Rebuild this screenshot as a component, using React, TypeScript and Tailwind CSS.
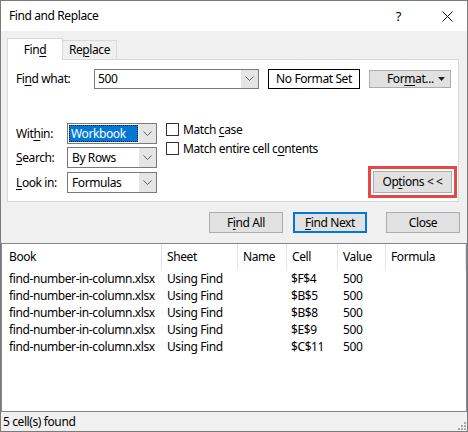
import React from 'react';

const U = ({ children }: { children: React.ReactNode }) => (
  <span className="underline underline-offset-2 decoration-1">{children}</span>
);

function Chevron() {
  return (
    <svg width="9" height="6" viewBox="0 0 9 6" className="text-[#606060]">
      <polyline points="0.5,0.5 4.5,4.5 8.5,0.5" fill="none" stroke="currentColor" strokeWidth="1" />
    </svg>
  );
}

function Combo({ value, width, selected }: { value: string; width: string; selected?: boolean }) {
  return (
    <div className={`flex h-[21px] ${width} border border-[#7a7a7a] bg-white`}>
      <div className="flex-1 flex items-stretch p-px">
        {selected ? (
          <div className="flex-1 flex items-center pl-[2px] bg-[#0078d7] text-white outline-1 outline-dotted outline-[#1a1a1a] -outline-offset-1">
            {value}
          </div>
        ) : (
          <div className="flex-1 flex items-center pl-[3px]">{value}</div>
        )}
      </div>
      <div className="w-[17px] bg-[#e5e5e5] flex items-center justify-center">
        <Chevron />
      </div>
    </div>
  );
}

function Checkbox({ children }: { children: React.ReactNode }) {
  return (
    <div className="flex items-center h-[13px]">
      <div className="w-[13px] h-[13px] border border-[#333333] bg-white" />
      <span className="ml-[4px]">{children}</span>
    </div>
  );
}

const rows = [
  { cell: '$F$4' },
  { cell: '$B$5' },
  { cell: '$B$8' },
  { cell: '$E$9' },
  { cell: '$C$11' },
];

const cols = 'grid grid-cols-[160px_76px_49px_51px_48px_80px]';

export default function App() {
  return (
    <div className="w-[468px] h-[432px] flex flex-col border border-[#7a7a7a] bg-[#f0f0f0] text-[12px] tracking-[-0.4px] whitespace-nowrap text-black font-['Noto_Sans',sans-serif] leading-none overflow-hidden">
      {/* Title bar */}
      <div className="h-[30px] shrink-0 bg-white flex items-center pl-[8px] pr-[14px]">
        <span className="text-[12px]">Find and Replace</span>
        <span className="ml-auto text-[13px] mr-[41px]">?</span>
        <svg width="11" height="11" viewBox="0 0 11 11">
          <path d="M0.5 0.5 L10.5 10.5 M10.5 0.5 L0.5 10.5" stroke="#111" strokeWidth="1" />
        </svg>
      </div>

      {/* Body */}
      <div className="flex flex-col pt-[7px]">
        {/* Tabs */}
        <div className="relative z-10 flex items-end h-[22px] ml-[6px]">
          <div className="h-[22px] w-[56px] flex items-center justify-center bg-white border border-b-0 border-[#d9d9d9]">
            <span>
              Fin<U>d</U>
            </span>
          </div>
          <div className="h-[19px] w-[54px] mb-px flex items-center justify-center bg-[#f0f0f0] border border-l-0 border-b-0 border-[#d9d9d9]">
            <span>
              Re<U>p</U>lace
            </span>
          </div>
        </div>

        {/* Tab panel */}
        <div className="-mt-px ml-[6px] w-[452px] h-[143px] bg-white border border-[#d9d9d9] flex flex-col pl-[8px] pr-px pb-[3px]">
          <div className="mt-[9px] flex items-center h-[20px]">
            <div className="w-[78px]">
              Fi<U>n</U>d what:
            </div>
            <div className="flex h-[20px] w-[165px] border border-[#7a7a7a] bg-white">
              <div className="flex-1 flex items-center pl-[3px]">500</div>
              <div className="w-[17px] bg-[#e5e5e5] flex items-center justify-center">
                <Chevron />
              </div>
            </div>
            <div className="ml-[9px] h-[20px] w-[92px] border border-black flex items-center justify-center">
              No Format Set
            </div>
            <div className="ml-[9px] h-[18px] w-[82px] bg-[#e1e1e1] border border-[#adadad] flex items-center pl-[17px] pr-[5px]">
              <span>
                For<U>m</U>at...
              </span>
              <svg width="7" height="4" viewBox="0 0 7 4" className="ml-auto">
                <polygon points="0,0 7,0 3.5,4" fill="#222" />
              </svg>
            </div>
          </div>

          <div className="mt-[34px] flex flex-1">
            <div className="flex flex-col">
              <div className="flex items-center">
                <div className="w-[51px]">
                  Wit<U>h</U>in:
                </div>
                <Combo value="Workbook" width="w-[90px]" selected />
              </div>
              <div className="flex items-center mt-[3px]">
                <div className="w-[51px]">
                  <U>S</U>earch:
                </div>
                <Combo value="By Rows" width="w-[90px]" />
              </div>
              <div className="flex items-center mt-[4px]">
                <div className="w-[51px]">
                  <U>L</U>ook in:
                </div>
                <Combo value="Formulas" width="w-[90px]" />
              </div>
            </div>

            <div className="ml-[9px] flex flex-col gap-[6px]">
              <Checkbox>
                Match <U>c</U>ase
              </Checkbox>
              <Checkbox>
                Match entire cell c<U>o</U>ntents
              </Checkbox>
            </div>

            <div className="flex-1 flex items-end justify-end">
              <div className="w-[89px] h-[32px] border-[3px] border-[#e8474a] flex items-center justify-center">
                <div className="w-[79px] h-[22px] bg-[#e1e1e1] border border-[#adadad] flex items-center justify-center">
                  <span>
                    Op<U>t</U>ions &lt; &lt;
                  </span>
                </div>
              </div>
            </div>
          </div>
        </div>

        {/* Action buttons */}
        <div className="mt-[10px] flex justify-end pr-[7px]">
          <div className="w-[74px] h-[21px] bg-[#e1e1e1] border border-[#adadad] flex items-center justify-center">
            <span>
              F<U>i</U>nd All
            </span>
          </div>
          <div className="ml-[10px] w-[74px] h-[21px] bg-[#e1e1e1] border-2 border-[#0078d7] flex items-center justify-center">
            <span>
              <U>F</U>ind Next
            </span>
          </div>
          <div className="ml-[19px] w-[74px] h-[21px] bg-[#e1e1e1] border border-[#adadad] flex items-center justify-center">
            Close
          </div>
        </div>
      </div>

      {/* Results list */}
      <div className="mt-[10px] flex-1 bg-white border border-[#828790] flex flex-col">
        <div className={`${cols} h-[26px]`}>
          {['Book', 'Sheet', 'Name', 'Cell', 'Value', 'Formula'].map((h, i) => (
            <div
              key={h}
              className={`flex items-center border-r border-[#e5e5e5] ${i === 0 ? 'pl-[7px]' : 'pl-[5px]'}`}
            >
              {h}
            </div>
          ))}
        </div>
        {rows.map((r) => (
          <div key={r.cell} className={`${cols} h-[17px] items-center`}>
            <div className="pl-[7px]">find-number-in-column.xlsx</div>
            <div className="pl-[5px]">Using Find</div>
            <div />
            <div className="pl-[4px]">{r.cell}</div>
            <div className="pl-[5px]">500</div>
            <div />
          </div>
        ))}
      </div>

      {/* Status bar */}
      <div className="h-[19px] shrink-0 flex items-center pl-[2px] pr-[1px]">
        <span>5 cell(s) found</span>
        <svg width="8" height="8" viewBox="0 0 8 8" className="ml-auto self-end mb-[1px]">
          <g fill="#a8a8a8">
            <rect x="6" y="0" width="2" height="2" />
            <rect x="3" y="3" width="2" height="2" />
            <rect x="6" y="3" width="2" height="2" />
            <rect x="0" y="6" width="2" height="2" />
            <rect x="3" y="6" width="2" height="2" />
            <rect x="6" y="6" width="2" height="2" />
          </g>
        </svg>
      </div>
    </div>
  );
}
